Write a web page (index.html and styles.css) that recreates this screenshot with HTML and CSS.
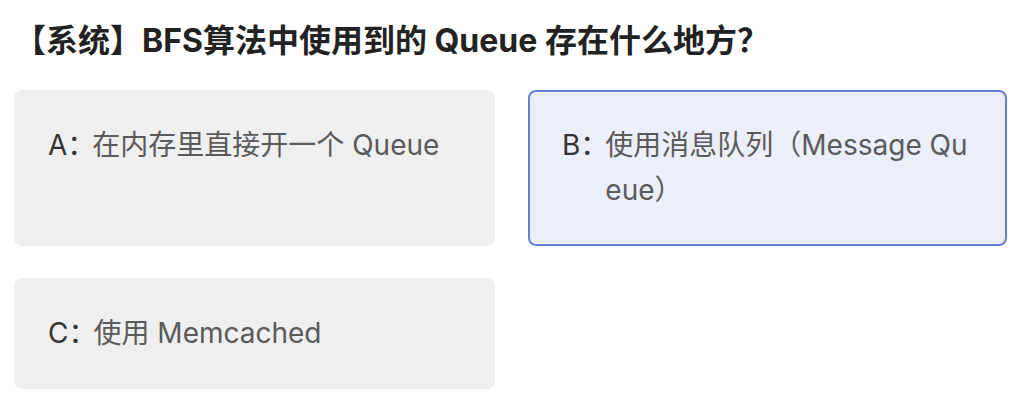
FILE: index.html
```html
<!DOCTYPE html>
<html lang="zh-CN">
<head>
<meta charset="utf-8">
<link rel="stylesheet" href="styles.css">
</head>
<body>
<div class="quiz">
  <h1 class="question">【系统】BFS算法中使用到的 Queue 存在什么地方？</h1>
  <div class="options">
    <div class="option"><span class="label">A：</span><span class="text">在内存里直接开一个 Queue</span></div>
    <div class="option selected"><span class="label">B：</span><span class="text">使用消息队列（Message Queue）</span></div>
    <div class="option"><span class="label">C：</span><span class="text">使用 Memcached</span></div>
  </div>
</div>
</body>
</html>
```

FILE: styles.css
```css
* { box-sizing: border-box; }
html, body { margin: 0; background: #ffffff; }
body {
  font-family: Inter, "Noto Sans CJK SC", sans-serif;
}
.quiz {
  padding: 19px 14px 0 14px;
}
.question {
  margin: 0 0 27px 0;
  font-size: 32px;
  line-height: 44px;
  font-weight: 700;
  color: #222222;
}
.options {
  display: grid;
  grid-template-columns: 481px 479px;
  column-gap: 33px;
  row-gap: 32px;
}
.option {
  display: flex;
  align-items: flex-start;
  background: #efefef;
  border: 2px solid transparent;
  border-radius: 8px;
  padding: 31px 32px;
  font-size: 28px;
  line-height: 45px;
  color: #5a5a5a;
}
.option.selected {
  background: #eceefa;
  border-color: #6381d8;
}
.label {
  flex: none;
  color: #333333;
  margin-right: -3px;
}
.text {
  flex: 1;
  word-break: break-all;
}
```
